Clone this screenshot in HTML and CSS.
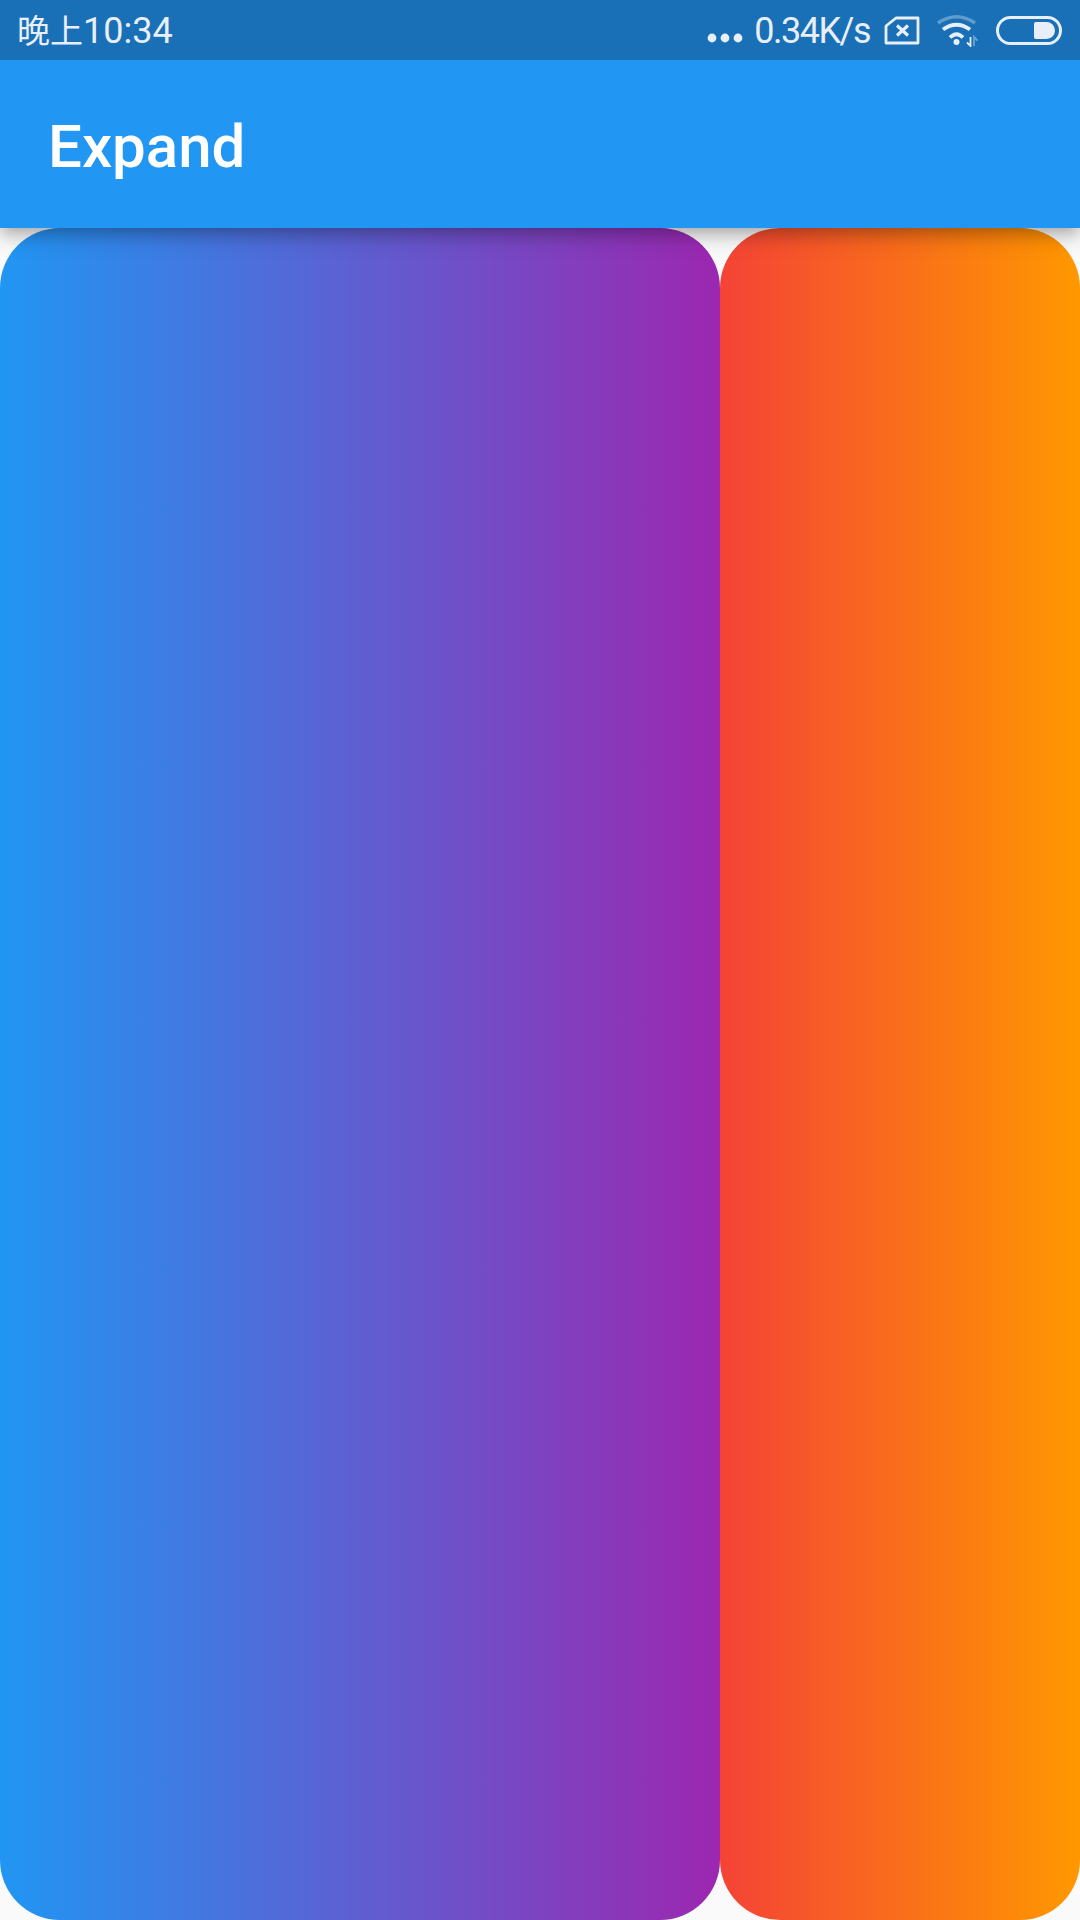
FILE: index.html
```html
<!DOCTYPE html>
<html lang="zh">
<head>
<meta charset="utf-8">
<title>Expand</title>
<link rel="stylesheet" href="styles.css">
</head>
<body>
<div class="status">
  <span class="time"><span class="cjk">晚上</span>10:34</span>
  <div class="status-right">
    <svg class="dots" width="36" height="10" viewBox="0 0 36 10"><circle cx="5" cy="5" r="4.4"/><circle cx="18" cy="5" r="4.4"/><circle cx="31" cy="5" r="4.4"/></svg>
    <span class="speed">0.34K/s</span>
    <svg class="sim" width="36" height="30" viewBox="0 0 36 30"><path d="M12 3H34V28H2V11Z" fill="none" stroke="#e8eff8" stroke-width="2.8" stroke-linejoin="round"/><path d="M13 10.5L24 20.5M24 10.5L13 20.5" fill="none" stroke="#e8eff8" stroke-width="3.2"/></svg>
    <svg class="wifi" width="42" height="34" viewBox="0 0 42 34"><path d="M2 10Q20.5 -2.5 39 10" fill="none" stroke="#e8eff8" stroke-opacity=".35" stroke-width="3.4"/><path d="M7 16.5Q20.5 7 34 16.5" fill="none" stroke="#e8eff8" stroke-width="3.8"/><path d="M14 24.5Q20.5 18 27 24.5" fill="none" stroke="#e8eff8" stroke-width="3.6"/><circle cx="20.5" cy="29" r="3" fill="#e8eff8"/><path d="M34.5 24V33L31 29.5" fill="none" stroke="#e8eff8" stroke-width="1.8"/><path d="M38 33V24L41.5 27.5" fill="none" stroke="#e8eff8" stroke-opacity=".4" stroke-width="1.8"/></svg>
    <div class="battery"><div class="level"></div></div>
  </div>
</div>
<header class="appbar"><h1>Expand</h1></header>
<main class="panels">
  <div class="panel panel-blue"></div>
  <div class="panel panel-orange"></div>
</main>
</body>
</html>
```
FILE: styles.css
```css
* { box-sizing: border-box; }
html, body { margin: 0; padding: 0; }
body {
  width: 1080px;
  height: 1920px;
  overflow: hidden;
  background: #fafafa;
  display: flex;
  flex-direction: column;
  font-family: Roboto, "Noto Sans CJK SC", sans-serif;
}
.status {
  height: 60px;
  background: #1970b6;
  color: #e8eff8;
  display: flex;
  align-items: center;
  justify-content: space-between;
  padding: 0 18px 0 17px;
  flex: none;
  position: relative;
  z-index: 3;
}
.time { font-size: 36px; line-height: 60px; font-weight: 400; padding-top: 2px; }
.cjk { font-size: 33px; }
.status-right { display: flex; align-items: center; }
.dots { fill: #e8eff8; margin-top: 15px; margin-right: 11px; }
.speed { font-size: 36px; line-height: 60px; font-weight: 400; letter-spacing: -1.5px; padding-top: 2px; margin-right: 14px; }
.sim { margin-right: 16px; }
.wifi { margin-right: 18px; }
.battery {
  width: 66px;
  height: 29px;
  border: 3px solid #e8eff8;
  border-radius: 15px;
  display: flex;
  justify-content: flex-end;
  padding: 3px 4px;
}
.level { width: 21px; background: #e8eff8; border-radius: 2px 9px 9px 2px; }
.appbar {
  height: 168px;
  background: #2196f3;
  padding: 4px 0 0 48px;
  display: flex;
  align-items: center;
  flex: none;
  position: relative;
  z-index: 2;
  box-shadow: 0 6px 12px -3px rgba(0, 0, 0, .18), 0 12px 15px rgba(0, 0, 0, .1), 0 3px 30px rgba(0, 0, 0, .12);
}
.appbar h1 {
  margin: 0;
  color: #fff;
  font-size: 60px;
  font-weight: 500;
}
.panels { flex: 1; display: flex; min-height: 0; }
.panel { border-radius: 60px; }
.panel-blue { flex: 2; background: linear-gradient(90deg, #2196f3, #9c27b0); }
.panel-orange { flex: 1; background: linear-gradient(90deg, #f44336, #ff9800); }
```
